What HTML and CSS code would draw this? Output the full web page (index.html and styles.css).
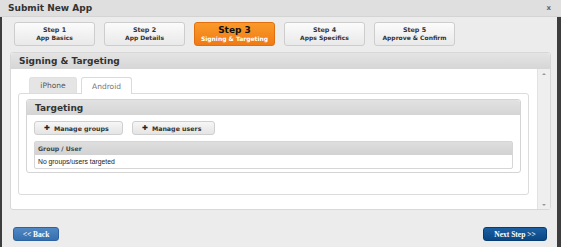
FILE: index.html
```html
<!DOCTYPE html>
<html>
<head>
<meta charset="utf-8">
<link rel="stylesheet" href="styles.css">
</head>
<body>
<div class="dialog">
  <div class="dlg-head">
    <span class="dlg-title">Submit New App</span>
    <span class="dlg-close">x</span>
  </div>
  <div class="dlg-body">
    <div class="steps">
      <div class="step"><div class="step-n">Step 1</div><div class="step-t">App Basics</div></div>
      <div class="step"><div class="step-n">Step 2</div><div class="step-t">App Details</div></div>
      <div class="step step-active"><div class="step-n">Step 3</div><div class="step-t">Signing &amp; Targeting</div></div>
      <div class="step"><div class="step-n">Step 4</div><div class="step-t">Apps Specifics</div></div>
      <div class="step"><div class="step-n">Step 5</div><div class="step-t">Approve &amp; Confirm</div></div>
    </div>
    <div class="panel">
      <div class="panel-head">Signing &amp; Targeting</div>
      <div class="panel-body">
        <div class="panel-main">
          <div class="tabs">
            <div class="tab">iPhone</div>
            <div class="tab tab-active">Android</div>
          </div>
          <div class="tab-box">
            <div class="target">
              <div class="target-head">Targeting</div>
              <div class="target-body">
                <div class="actions">
                  <div class="btn"><span class="plus">✚</span>Manage groups</div>
                  <div class="btn"><span class="plus">✚</span>Manage users</div>
                </div>
                <div class="table">
                  <div class="th">Group / User</div>
                  <div class="td">No groups/users targeted</div>
                </div>
              </div>
            </div>
          </div>
        </div>
        <div class="scrollbar">
          <span class="arrow up"></span>
          <span class="arrow down"></span>
        </div>
      </div>
    </div>
    <div class="footer">
      <div class="nav nav-back">&lt;&lt; Back</div>
      <div class="nav nav-next">Next Step &gt;&gt;</div>
    </div>
  </div>
</div>
</body>
</html>
```

FILE: styles.css
```css
html, body {
  margin: 0;
  padding: 0;
  background: #3d3d3d;
}
body {
  width: 561px;
  height: 247px;
  overflow: hidden;
  font-family: "DejaVu Sans", Verdana, sans-serif;
}
.dialog {
  width: 561px;
  height: 247px;
  display: flex;
  flex-direction: column;
}
.dlg-head {
  height: 17px;
  background: #dfdfdf;
  display: flex;
  align-items: center;
  justify-content: space-between;
  padding: 0 10px 0 8px;
  box-sizing: border-box;
  border-bottom: 1px solid #d4d4d4;
}
.dlg-title {
  font-size: 9px;
  font-weight: bold;
  color: #333;
}
.dlg-close {
  font-size: 7px;
  color: #666;
  font-weight: bold;
}
.dlg-body {
  flex: 1;
  margin: 0 4px 0 2px;
  background: #ececec;
  display: flex;
  flex-direction: column;
  padding: 5px 0 0 8px;
}
.steps {
  display: flex;
  gap: 9px;
  padding-left: 4px;
}
.step {
  width: 81px;
  height: 24px;
  box-sizing: border-box;
  border: 1px solid #cdcdcd;
  border-radius: 3px;
  background: linear-gradient(#fbfbfb, #e9e9e9);
  display: flex;
  flex-direction: column;
  align-items: center;
  justify-content: center;
  color: #333;
  font-weight: bold;
  font-size: 6px;
  line-height: 8px;
}
.step-n { font-size: 6.4px; }
.step-t { font-size: 6px; }
.step-active {
  background: linear-gradient(#fa9a2a, #f07a14);
  border-color: #e0700f;
}
.step-active .step-n {
  font-size: 9px;
  line-height: 10px;
  color: #111;
}
.step-active .step-t {
  color: #fff;
}
.panel {
  margin-top: 6px;
  width: 541px;
  height: 158px;
  display: flex;
  flex-direction: column;
  border-radius: 3px;
  border: 1px solid #d8d8d8;
  box-sizing: border-box;
  background: #fff;
}
.panel-head {
  height: 16px;
  flex-shrink: 0;
  background: linear-gradient(#e4e4e4, #d6d6d6);
  border-radius: 3px 3px 0 0;
  font-size: 9px;
  font-weight: bold;
  color: #333;
  padding-left: 8px;
  display: flex;
  align-items: center;
}
.panel-body {
  flex: 1;
  display: flex;
}
.panel-main {
  flex: 1;
  padding: 8px 8px 0 7px;
}
.scrollbar {
  width: 12px;
  background: #efefef;
  border-left: 1px solid #e2e2e2;
  display: flex;
  flex-direction: column;
  justify-content: space-between;
  align-items: center;
  padding: 4px 0 3px;
}
.arrow {
  width: 0;
  height: 0;
  border-left: 2.5px solid transparent;
  border-right: 2.5px solid transparent;
}
.arrow.up { border-bottom: 2px solid #999; }
.arrow.down { border-top: 2px solid #999; }
.tabs {
  display: flex;
  gap: 4px;
  padding-left: 11px;
  height: 16px;
  position: relative;
  z-index: 1;
}
.tab {
  width: 48px;
  height: 16px;
  box-sizing: border-box;
  background: #e5e5e5;
  border: 1px solid #e0e0e0;
  border-bottom: none;
  border-radius: 3px 3px 0 0;
  font-size: 7.5px;
  color: #555;
  display: flex;
  align-items: center;
  justify-content: center;
}
.tab-active {
  width: 51px;
  background: #fff;
  border-color: #dadada;
  height: 17px;
  color: #777;
}
.tab-box {
  width: 511px;
  height: 102px;
  box-sizing: border-box;
  border: 1px solid #dcdcdc;
  border-radius: 3px;
  padding: 5px 7px 0 7px;
}
.target {
  width: 495px;
  height: 74px;
  box-sizing: border-box;
  border: 1px solid #d4d4d4;
  border-radius: 3px;
}
.target-head {
  height: 15px;
  background: linear-gradient(#e2e2e2, #d5d5d5);
  border-radius: 3px 3px 0 0;
  font-size: 9px;
  font-weight: bold;
  color: #333;
  padding-left: 8px;
  display: flex;
  align-items: center;
}
.target-body {
  padding: 6px 7px 0 7px;
}
.actions {
  display: flex;
  gap: 9px;
}
.btn {
  height: 14px;
  box-sizing: border-box;
  border: 1px solid #cfcfcf;
  border-radius: 3px;
  background: linear-gradient(#f6f6f6, #e4e4e4);
  font-size: 6.3px;
  font-weight: bold;
  color: #333;
  display: flex;
  align-items: center;
  padding: 0 6px 0 9px;
}
.btn:first-child { width: 89px; }
.btn:last-child { width: 83px; }
.plus {
  font-size: 7px;
  margin-right: 4px;
  line-height: 1;
  color: #222;
}
.table {
  margin-top: 6px;
  width: 479px;
  box-sizing: border-box;
  border: 1px solid #d6d6d6;
  border-radius: 2px;
}
.th {
  height: 13px;
  background: linear-gradient(#dedede, #d2d2d2);
  font-size: 6.2px;
  font-weight: bold;
  color: #444;
  padding-left: 3px;
  display: flex;
  align-items: center;
}
.td {
  height: 13px;
  font-size: 6.8px;
  font-family: "Liberation Sans", Arial, sans-serif;
  color: #222;
  padding-left: 3px;
  display: flex;
  align-items: center;
}
.footer {
  display: flex;
  justify-content: space-between;
  padding: 17px 10px 0 3px;
}
.nav {
  height: 14px;
  box-sizing: border-box;
  border-radius: 3px;
  font-family: "Liberation Serif", "Times New Roman", serif;
  font-weight: bold;
  font-size: 7.5px;
  color: #fff;
  display: flex;
  align-items: center;
  justify-content: center;
}
.nav-back {
  width: 46px;
  background: linear-gradient(#4f88c4, #356fae);
  border: 1px solid #2e62a0;
}
.nav-next {
  width: 64px;
  background: linear-gradient(#1d5fa4, #0a4783);
  border: 1px solid #083d73;
}
```
